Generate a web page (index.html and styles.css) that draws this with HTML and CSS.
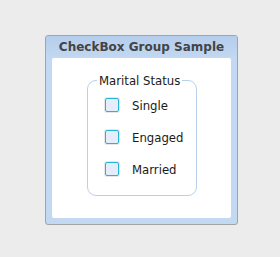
FILE: index.html
```html
<!DOCTYPE html>
<html lang="en">
<head>
  <meta charset="UTF-8" />
  <title>CheckBox Group Sample</title>
  <link rel="stylesheet" href="styles.css">
</head>
<body>
  <div class="panel">
    <div class="panel-title">CheckBox Group Sample</div>
    <div class="panel-body">
      <fieldset class="group">
        <legend>Marital Status</legend>
        <div class="rows">
          <label class="row"><span class="box"></span>Single</label>
          <label class="row"><span class="box"></span>Engaged</label>
          <label class="row"><span class="box"></span>Married</label>
        </div>
      </fieldset>
    </div>
  </div>
</body>
</html>
```

FILE: styles.css
```css
body {
  margin: 0;
  width: 280px;
  height: 257px;
  background: #ececec;
  font-family: 'DejaVu Sans Condensed', 'DejaVu Sans', sans-serif;
  font-size: 13px;
  color: #1a1a1a;
}
.panel {
  margin: 35px 0 0 45px;
  width: 191px;
  height: 188px;
  border: 1px solid #a3a3a3;
  border-radius: 3px;
  background: #c3d8f1;
  display: flex;
  flex-direction: column;
}
.panel-title {
  height: 22px;
  line-height: 22px;
  text-align: center;
  font-family: 'DejaVu Sans', sans-serif;
  font-weight: bold;
  font-size: 12px;
  color: #444;
  background: linear-gradient(#b4cdec, #c3d8f1);
  border-radius: 2px 2px 0 0;
}
.panel-body {
  margin: 0 6px 6px;
  flex: 1;
  background: #fff;
  border-radius: 2px;
  padding-top: 15px;
}
.group {
  margin: 0 0 0 35px;
  width: 110px;
  height: 123px;
  padding: 0 0 0 17px;
  box-sizing: border-box;
  border: 1px solid #b8d0ec;
  border-radius: 9px;
}
.group legend {
  padding: 0 2px;
  margin-left: -8px;
  white-space: nowrap;
}
.rows {
  display: flex;
  flex-direction: column;
  gap: 18px;
  padding-top: 10px;
}
.row {
  display: flex;
  align-items: center;
  height: 14px;
}
.box {
  width: 12px;
  height: 12px;
  border: 1px solid #27b3d2;
  border-radius: 2px;
  background: #e3edfb;
  box-shadow: 0 0 0 1px #e8e8e8;
  margin-right: 13px;
}
```
